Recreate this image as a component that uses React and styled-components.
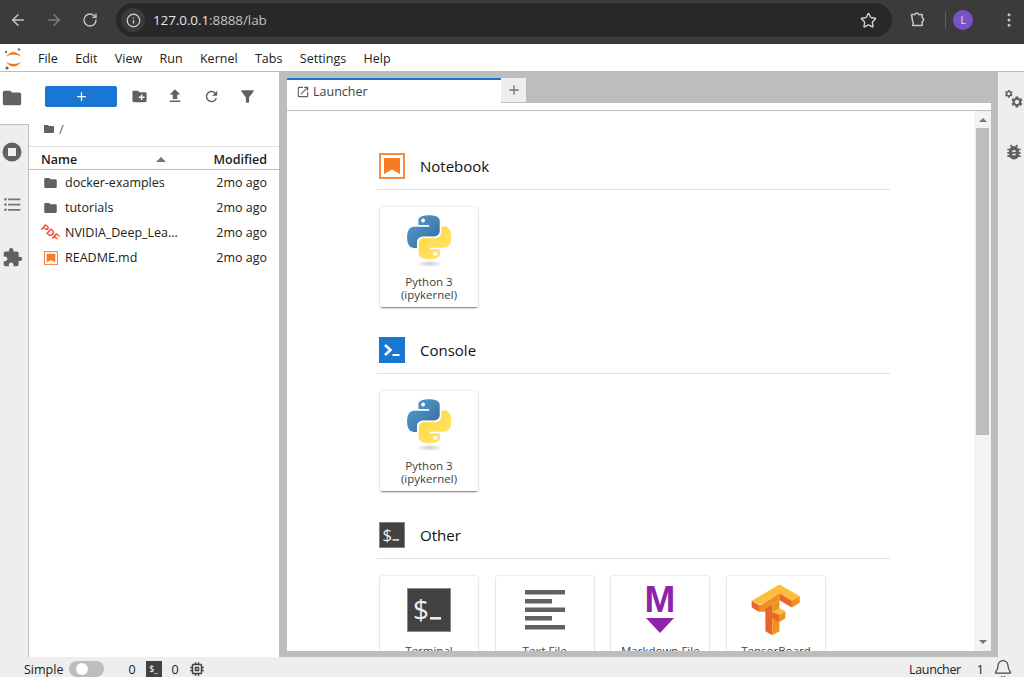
import React from 'react';
import styled, { createGlobalStyle } from 'styled-components';
import { ArrowLeft, ArrowRight, RotateCw, Info, Star, EllipsisVertical, Bell } from 'lucide-react';
import {
  MdFolder, MdCreateNewFolder, MdFileUpload, MdRefresh, MdFilterAlt, MdFormatListBulleted,
  MdExtension, MdBugReport, MdOpenInNew, MdAdd, MdMemory,
} from 'react-icons/md';

const GlobalStyle = createGlobalStyle`
  html, body { margin: 0; padding: 0; height: 100%; overflow: hidden; }
  body { font-family: "Open Sans", "Noto Sans", sans-serif; color: #212121; background: #fff; }
`;

const Page = styled.div`
  width: 1024px;
  height: 677px;
  display: flex;
  flex-direction: column;
  overflow: hidden;
`;

/* browser chrome */
const Chrome = styled.div`
  height: 44px;
  flex: none;
  box-sizing: border-box;
  padding: 3px 0 7px;
  background: #3b3b3b;
  display: flex;
  align-items: stretch;
`;
const NavGroup = styled.div`
  width: 116px;
  flex: none;
  display: flex;
  align-items: center;
`;
const NavBtn = styled.div`
  width: 36px;
  display: flex;
  justify-content: center;
  color: ${p => (p.$off ? '#7d7d7d' : '#c7c7c7')};
`;
const AddressBar = styled.div`
  width: 776px;
  flex: none;
  background: #282828;
  border-radius: 17px;
  display: flex;
  align-items: center;
  padding: 0 15px 0 5px;
  box-sizing: border-box;
`;
const InfoChip = styled.div`
  width: 24px;
  height: 24px;
  border-radius: 50%;
  background: #3b3b3b;
  color: #d6d6d6;
  display: flex;
  align-items: center;
  justify-content: center;
`;
const Url = styled.div`
  margin-left: 8px;
  font-size: 13.5px;
  letter-spacing: -0.1px;
  color: #c2c2c2;
  flex: 1;
  b { font-weight: 400; color: #e6e6e6; }
`;
const ChromeRight = styled.div`
  flex: 1;
  display: flex;
  align-items: center;
  color: #c7c7c7;
  padding-left: 17px;
`;
const Separator = styled.div`
  width: 1px;
  height: 16px;
  background: #5f5f5f;
  margin: 0 7px 0 18px;
`;
const Avatar = styled.div`
  width: 20px;
  height: 20px;
  border-radius: 50%;
  background: #7a52c7;
  color: #e8e0f8;
  font-size: 10px;
  display: flex;
  align-items: center;
  justify-content: center;
  margin: 0 27px 0 0;
`;

/* jupyter menu */
const MenuBar = styled.div`
  height: 28px;
  flex: none;
  box-sizing: border-box;
  display: flex;
  align-items: center;
  padding: 1px 0 0 1px;
  background: #fff;
  border-bottom: 1px solid #bdbdbd;
`;
const MenuItem = styled.span`
  font-size: 12.5px;
  margin-left: ${p => (p.$first ? '13px' : '0')};
  margin-right: 17.4px;
`;

const Body = styled.div`
  flex: 1;
  min-height: 0;
  display: flex;
  background: #bdbdbd;
`;

const SideBar = styled.div`
  width: 29px;
  flex: none;
  display: flex;
  flex-direction: column;
  background: #eee;
  border-right: 1px solid #bdbdbd;
  box-sizing: border-box;
`;
const SideTab = styled.div`
  height: 53px;
  width: ${p => (p.$active ? '29px' : 'auto')};
  flex: none;
  display: flex;
  align-items: center;
  justify-content: center;
  box-sizing: border-box;
  padding-right: ${p => (p.$active ? '5px' : '4px')};
  color: ${p => p.$color || '#616161'};
  background: ${p => (p.$active ? '#fff' : 'transparent')};
  border-bottom: ${p => (p.$active ? '1px solid #bdbdbd' : 'none')};
`;

const FilePanel = styled.div`
  width: 250px;
  flex: none;
  background: #fff;
  display: flex;
  flex-direction: column;
  margin-right: 8px;
  font-size: 12.5px;
`;
const FileToolbar = styled.div`
  height: 49px;
  flex: none;
  display: flex;
  align-items: center;
  padding: 0 0 1px 16px;
  box-sizing: border-box;
  color: #616161;
`;
const NewButton = styled.div`
  width: 72px;
  height: 21px;
  background: #1976d2;
  border-radius: 2px;
  color: #fff;
  display: flex;
  align-items: center;
  justify-content: center;
  margin-right: 4px;
`;
const ToolButton = styled.div`
  width: 36px;
  display: flex;
  justify-content: center;
`;
const Crumbs = styled.div`
  height: 26px;
  display: flex;
  align-items: center;
  gap: 4px;
  padding: 0 0 10px 14px;
  box-sizing: border-box;
  color: #616161;
  border-bottom: 1px solid #e0e0e0;
  flex: none;
  font-size: 13px;
`;
const ListHeader = styled.div`
  height: 23px;
  flex: none;
  box-sizing: border-box;
  display: flex;
  align-items: center;
  padding: 2px 12px 0;
  font-weight: 600;
  border-bottom: 1px solid #bdbdbd;
`;
const HeaderName = styled.span`
  flex: 1;
`;
const SortArrow = styled.span`
  width: 0;
  height: 0;
  border-left: 5px solid transparent;
  border-right: 5px solid transparent;
  border-bottom: 5px solid #757575;
  margin-right: 48px;
`;
const FileRow = styled.div`
  height: 25px;
  display: flex;
  align-items: center;
  padding: 0 12px 0 14px;
  flex: none;
`;
const FileIcon = styled.span`
  width: 15px;
  height: 16px;
  flex: none;
  margin-right: 7px;
  color: #616161;
  display: flex;
  align-items: center;
  justify-content: center;
`;
const FileName = styled.span`
  flex: 1;
  white-space: nowrap;
  overflow: hidden;
`;
const FileDate = styled.span`
  white-space: nowrap;
`;

/* dock */
const Dock = styled.div`
  width: 704px;
  flex: none;
  display: flex;
  flex-direction: column;
  padding-bottom: 6px;
  box-sizing: border-box;
`;
const TabBar = styled.div`
  height: 31px;
  flex: none;
  padding-top: 6px;
  box-sizing: border-box;
  display: flex;
  align-items: flex-start;
`;
const Tab = styled.div`
  width: 214px;
  height: 25px;
  box-sizing: border-box;
  background: #fff;
  border-top: 2px solid #1976d2;
  display: flex;
  align-items: center;
  padding-left: 9px;
  gap: 3px;
  font-size: 12.5px;
  color: #424242;
`;
const AddTab = styled.div`
  width: 25px;
  height: 24px;
  background: #eee;
  color: #757575;
  display: flex;
  align-items: center;
  justify-content: center;
`;
const TabStrip = styled.div`
  height: 8px;
  flex: none;
  background: #fff;
  border-bottom: 1px solid #bdbdbd;
  box-sizing: border-box;
`;
const LauncherPane = styled.div`
  flex: 1;
  min-height: 0;
  display: flex;
  background: #fff;
`;
const LauncherBody = styled.div`
  flex: 1;
  overflow: hidden;
  padding: 42px 0 0 90px;
`;
const ScrollTrack = styled.div`
  width: 17px;
  flex: none;
  background: #f3f3f3;
  display: flex;
  flex-direction: column;
  align-items: center;
`;
const ScrollArrow = styled.span`
  width: 0;
  height: 0;
  margin-top: ${p => (p.$down ? 'auto' : '7px')};
  margin-bottom: ${p => (p.$down ? '7px' : '6px')};
  border-left: 4px solid transparent;
  border-right: 4px solid transparent;
  border-${p => (p.$down ? 'top' : 'bottom')}: 4px solid #757575;
`;
const ScrollThumb = styled.div`
  width: 13px;
  height: 307px;
  background: #bdbdbd;
`;

const Section = styled.section`
  width: 513px;
  margin-bottom: ${p => p.$after || 30}px;
`;
const SectionHead = styled.div`
  display: flex;
  align-items: center;
  height: 26px;
  padding: 0 0 10px 2px;
  border-bottom: 1px solid #e0e0e0;
`;
const SectionTitle = styled.h2`
  margin: 0 0 0 15px;
  font-size: 15px;
  font-weight: 400;
  color: #111;
`;
const CardRow = styled.div`
  display: flex;
  gap: 17.67px;
  margin: 17px 0 0 3px;
`;
const Card = styled.div`
  width: 98px;
  height: 100px;
  flex: none;
  border-radius: 2px;
  background: #fff;
  box-shadow: 0 2px 2px -1px rgba(0, 0, 0, 0.5), 0 0 2px rgba(0, 0, 0, 0.25);
  display: flex;
  flex-direction: column;
  align-items: center;
`;
const CardIcon = styled.div`
  height: 69px;
  flex: none;
  display: flex;
  align-items: flex-start;
  justify-content: center;
  padding-top: ${p => p.$top || 8}px;
  box-sizing: border-box;
`;
const CardLabel = styled.div`
  font-size: 11.5px;
  line-height: 12.5px;
  text-align: center;
  color: #424242;
`;

const RightBar = styled.div`
  flex: 1;
  margin-left: 7px;
  padding-left: 6px;
  background: #eee;
  display: flex;
  flex-direction: column;
  color: #616161;
`;
const RightTab = styled.div`
  height: 53px;
  display: flex;
  align-items: center;
  justify-content: center;
`;

/* status */
const StatusBar = styled.div`
  height: 20px;
  flex: none;
  box-sizing: border-box;
  background: #eee;
  display: flex;
  align-items: center;
  font-size: 12.5px;
  padding: 4px 0 0 24px;
  overflow: hidden;
`;
const Toggle = styled.div`
  width: 35px;
  height: 16px;
  border-radius: 8px;
  background: #bdbdbd;
  margin: 0 24px 0 6px;
  box-sizing: border-box;
  padding: 2px 0 0 7px;
  flex: none;
`;
const ToggleKnob = styled.div`
  width: 12px;
  height: 12px;
  border-radius: 50%;
  background: #fff;
`;
const MiniTerm = styled.div`
  width: 16px;
  height: 16px;
  margin: 0 10px;
  background: #424242;
  color: #eee;
  font-size: 8px;
  line-height: 16px;
  text-align: center;
  font-weight: 600;
`;
const Spacer = styled.div`
  flex: 1;
`;
const StatusLabel = styled.span`
  letter-spacing: -0.35px;
`;
const StatusGap = styled.span`
  margin: ${p => p.$m};
  display: flex;
  align-items: center;
`;

const GEAR = 'M19.14 12.94c.04-.3.06-.61.06-.94 0-.32-.02-.64-.07-.94l2.03-1.58c.18-.14.23-.41.12-.61l-1.92-3.32c-.12-.22-.37-.29-.59-.22l-2.39.96c-.5-.38-1.03-.7-1.62-.94l-.36-2.54c-.04-.24-.24-.41-.48-.41h-3.84c-.24 0-.43.17-.47.41l-.36 2.54c-.59.24-1.13.57-1.62.94l-2.39-.96c-.22-.08-.47 0-.59.22L2.74 8.87c-.12.21-.08.47.12.61l2.03 1.58c-.05.3-.09.63-.09.94s.02.64.07.94l-2.03 1.58c-.18.14-.23.41-.12.61l1.92 3.32c.12.22.37.29.59.22l2.39-.96c.5.38 1.03.7 1.62.94l.36 2.54c.05.24.24.41.48.41h3.84c.24 0 .44-.17.47-.41l.36-2.54c.59-.24 1.13-.56 1.62-.94l2.39.96c.22.08.47 0 .59-.22l1.92-3.32c.12-.22.07-.47-.12-.61l-2.01-1.58zM12 15.6c-1.98 0-3.6-1.62-3.6-3.6s1.62-3.6 3.6-3.6 3.6 1.62 3.6 3.6-1.62 3.6-3.6 3.6z';

const JupyterLogo = () => (
  <svg width="24" height="24" viewBox="0 0 24 24">
    <path d="M5 10.5 Q12.5 1.5 20 10.5 Q12.5 6.5 5 10.5z" fill="#f37726" />
    <path d="M5 16 Q12.5 25 20 16 Q12.5 20 5 16z" fill="#f37726" />
    <circle cx="18" cy="3.5" r="1.3" fill="#767677" />
    <circle cx="5" cy="6" r="1.2" fill="#767677" />
    <circle cx="6" cy="22" r="1.6" fill="#616262" />
  </svg>
);

const ExtensionsIcon = () => (
  <svg width="18" height="18" viewBox="0 0 18 18" fill="none" stroke="#c7c7c7" strokeWidth="1.5" strokeLinejoin="round">
    <path d="M2.5 3.5h3.4a1.9 1.9 0 0 1 3.7 0h3.6v3.2a1.9 1.9 0 0 1 0 3.7v4.1H3.6c.9-1.5.9-3 0-4.5z" />
  </svg>
);

const StopIcon = () => (
  <svg width="20" height="20" viewBox="0 0 20 20">
    <path fillRule="evenodd" d="M10 .5a9.5 9.5 0 1 0 0 19 9.5 9.5 0 0 0 0-19zM6 6h8v8H6z" fill="#616161" />
  </svg>
);

const GearsIcon = () => (
  <svg width="20" height="20" viewBox="0 0 20 20" fill="#616161">
    <g transform="scale(.4)"><path d={GEAR} /></g>
    <g transform="translate(6 6) scale(.58)"><path d={GEAR} /></g>
  </svg>
);

const PythonIcon = ({ id }) => (
  <svg width="44" height="54" viewBox="0 0 110 135">
    <defs>
      <linearGradient id={`${id}b`} x1="0" y1="0" x2="1" y2="1">
        <stop offset="0" stopColor="#5a9fd4" />
        <stop offset="1" stopColor="#306998" />
      </linearGradient>
      <linearGradient id={`${id}y`} x1="1" y1="1" x2="0" y2="0">
        <stop offset="0" stopColor="#ffd43b" />
        <stop offset="1" stopColor="#ffe873" />
      </linearGradient>
      <radialGradient id={`${id}s`}>
        <stop offset="0" stopColor="#b8b8b8" stopOpacity=".75" />
        <stop offset="1" stopColor="#b8b8b8" stopOpacity="0" />
      </radialGradient>
    </defs>
    <path
      fillRule="evenodd"
      fill={`url(#${id}b)`}
      d="M54.9.5c-28 0-26.3 12.2-26.3 12.2l0 12.6h26.7v3.8H18S.1 27.1.1 55.3c0 28.2 15.6 27.2 15.6 27.2h9.3V69.4s-.5-15.6 15.4-15.6h26.5s14.9.2 14.9-14.4V15.3S84.2.5 54.9.5zM40.2 9a4.8 4.8 0 1 1 0 9.6 4.8 4.8 0 1 1 0-9.6z"
    />
    <path
      fillRule="evenodd"
      fill={`url(#${id}y)`}
      transform="rotate(180 55.5 55.5)"
      d="M54.9.5c-28 0-26.3 12.2-26.3 12.2l0 12.6h26.7v3.8H18S.1 27.1.1 55.3c0 28.2 15.6 27.2 15.6 27.2h9.3V69.4s-.5-15.6 15.4-15.6h26.5s14.9.2 14.9-14.4V15.3S84.2.5 54.9.5zM40.2 9a4.8 4.8 0 1 1 0 9.6 4.8 4.8 0 1 1 0-9.6z"
    />
    <ellipse cx="56" cy="122" rx="34" ry="8" fill={`url(#${id}s)`} />
  </svg>
);

const NotebookIcon = ({ size = 26 }) => (
  <svg width={size} height={size} viewBox="0 0 26 26">
    <rect x="1" y="1" width="24" height="24" fill="#fff" stroke="#f37726" strokeOpacity=".85" strokeWidth="2" />
    <path d="M5 5h16v16l-8-4.5L5 21z" fill="#f57c22" />
  </svg>
);

const ConsoleIcon = () => (
  <svg width="26" height="26" viewBox="0 0 26 26">
    <rect width="26" height="26" fill="#1976d2" />
    <path d="M6 8l5.5 5-5.5 5" fill="none" stroke="#fff" strokeWidth="2.6" />
    <rect x="13.5" y="17" width="7" height="2" fill="#fff" />
  </svg>
);

const TerminalIcon = ({ size }) => (
  <svg width={size} height={size} viewBox="0 0 44 44">
    <rect x=".5" y=".5" width="43" height="43" fill="#424242" stroke="#8a8a8a" />
    <text x="6" y="32" fontFamily="Open Sans, sans-serif" fontSize="28" fontWeight="400" fill="#eee">$</text>
    <rect x="23" y="29" width="11" height="2.6" fill="#eee" />
  </svg>
);

const TextFileIcon = () => (
  <svg width="40" height="42" viewBox="0 0 40 42" fill="#616161">
    <rect y="1" width="40" height="4.5" />
    <rect y="10" width="27" height="4.5" />
    <rect y="18.5" width="40" height="4.5" />
    <rect y="27" width="27" height="4.5" />
    <rect y="36" width="40" height="4.5" />
  </svg>
);

const MarkdownIcon = () => (
  <svg width="34" height="48" viewBox="0 0 34 48">
    <text x="17" y="26" textAnchor="middle" fontFamily="Liberation Sans, sans-serif" fontWeight="700" fontSize="37" fill="#8e24aa">M</text>
    <path d="M3 32h28L17 47z" fill="#8e24aa" />
  </svg>
);

const TensorBoardIcon = () => (
  <svg width="50" height="54" viewBox="453 70 153 160">
    <path d="M455 122L540 72l62 36-24 14-38-23-60 35z" fill="#fbbd3b" />
    <path d="M455 122l25 14v21l-25-15z" fill="#e9682e" />
    <path d="M480 136l60-37v22l-22 13v8l-21 13-17 0z" fill="#f0901f" />
    <path d="M540 99l38 23v20l-38-22z" fill="#e9682e" />
    <path d="M578 122l24-14v20l-24 14z" fill="#f0901f" />
    <path d="M497 147l21-13v93l-21-12z" fill="#e9632d" />
    <path d="M518 134l22-13v94l-22 12z" fill="#f0901f" />
    <path d="M518 157l22-13 18 10-18 11z" fill="#fbbd3b" />
    <path d="M518 157l22 8v22l-22-12z" fill="#e9632d" />
    <path d="M540 165l18-11v21l-18 12z" fill="#f0901f" />
  </svg>
);

const PdfIcon = () => (
  <svg width="15" height="15" viewBox="0 0 15 15" overflow="visible">
    <text x="7.5" y="11" textAnchor="middle" transform="rotate(40 7.5 7.5)" fontFamily="Liberation Sans, sans-serif" fontWeight="700" fontSize="10" fill="#f44336">PDF</text>
  </svg>
);

const menus = ['File', 'Edit', 'View', 'Run', 'Kernel', 'Tabs', 'Settings', 'Help'];
const files = [
  { name: 'docker-examples', icon: <MdFolder size={18} /> },
  { name: 'tutorials', icon: <MdFolder size={18} /> },
  { name: 'NVIDIA_Deep_Lea...', icon: <PdfIcon /> },
  { name: 'README.md', icon: <NotebookIcon size={14} /> },
];

const App = () => (
  <Page>
    <GlobalStyle />
    <Chrome>
      <NavGroup>
        <NavBtn><ArrowLeft size={18} /></NavBtn>
        <NavBtn $off><ArrowRight size={18} /></NavBtn>
        <NavBtn><RotateCw size={16} /></NavBtn>
      </NavGroup>
      <AddressBar>
        <InfoChip><Info size={15} /></InfoChip>
        <Url><b>127.0.0.1</b>:8888/lab</Url>
        <Star size={17} color="#d0d0d0" />
      </AddressBar>
      <ChromeRight>
        <ExtensionsIcon />
        <Separator />
        <Avatar>L</Avatar>
        <EllipsisVertical size={18} />
      </ChromeRight>
    </Chrome>

    <MenuBar>
      <JupyterLogo />
      {menus.map((m, i) => <MenuItem key={m} $first={i === 0}>{m}</MenuItem>)}
    </MenuBar>

    <Body>
      <SideBar>
        <SideTab $active><MdFolder size={22} /></SideTab>
        <SideTab><StopIcon /></SideTab>
        <SideTab $color="#757575"><MdFormatListBulleted size={21} /></SideTab>
        <SideTab><MdExtension size={21} /></SideTab>
      </SideBar>

      <FilePanel>
        <FileToolbar>
          <NewButton><MdAdd size={15} /></NewButton>
          <ToolButton><MdCreateNewFolder size={17} /></ToolButton>
          <ToolButton><MdFileUpload size={18} /></ToolButton>
          <ToolButton><MdRefresh size={17} /></ToolButton>
          <ToolButton><MdFilterAlt size={19} /></ToolButton>
        </FileToolbar>
        <Crumbs><MdFolder size={12} />/</Crumbs>
        <ListHeader>
          <HeaderName>Name</HeaderName>
          <SortArrow />
          <span>Modified</span>
        </ListHeader>
        {files.map(f => (
          <FileRow key={f.name}>
            <FileIcon>{f.icon}</FileIcon>
            <FileName>{f.name}</FileName>
            <FileDate>2mo ago</FileDate>
          </FileRow>
        ))}
      </FilePanel>

      <Dock>
        <TabBar>
          <Tab><MdOpenInNew size={14} color="#616161" />Launcher</Tab>
          <AddTab><MdAdd size={16} /></AddTab>
        </TabBar>
        <TabStrip />
        <LauncherPane>
          <LauncherBody>
            <Section $after={30}>
              <SectionHead><NotebookIcon /><SectionTitle>Notebook</SectionTitle></SectionHead>
              <CardRow>
                <Card>
                  <CardIcon><PythonIcon id="nb" /></CardIcon>
                  <CardLabel>Python 3<br />(ipykernel)</CardLabel>
                </Card>
              </CardRow>
            </Section>
            <Section $after={31}>
              <SectionHead><ConsoleIcon /><SectionTitle>Console</SectionTitle></SectionHead>
              <CardRow>
                <Card>
                  <CardIcon><PythonIcon id="co" /></CardIcon>
                  <CardLabel>Python 3<br />(ipykernel)</CardLabel>
                </Card>
              </CardRow>
            </Section>
            <Section>
              <SectionHead><TerminalIcon size={26} /><SectionTitle>Other</SectionTitle></SectionHead>
              <CardRow>
                <Card>
                  <CardIcon $top={12}><TerminalIcon size={44} /></CardIcon>
                  <CardLabel>Terminal</CardLabel>
                </Card>
                <Card>
                  <CardIcon $top={13}><TextFileIcon /></CardIcon>
                  <CardLabel>Text File</CardLabel>
                </Card>
                <Card>
                  <CardIcon $top={10}><MarkdownIcon /></CardIcon>
                  <CardLabel>Markdown File</CardLabel>
                </Card>
                <Card>
                  <CardIcon $top={7}><TensorBoardIcon /></CardIcon>
                  <CardLabel>TensorBoard</CardLabel>
                </Card>
              </CardRow>
            </Section>
          </LauncherBody>
          <ScrollTrack>
            <ScrollArrow />
            <ScrollThumb />
            <ScrollArrow $down />
          </ScrollTrack>
        </LauncherPane>
      </Dock>

      <RightBar>
        <RightTab><GearsIcon /></RightTab>
        <RightTab><MdBugReport size={20} /></RightTab>
      </RightBar>
    </Body>

    <StatusBar>
      <span>Simple</span>
      <Toggle><ToggleKnob /></Toggle>
      <span>0</span>
      <MiniTerm>$_</MiniTerm>
      <span>0</span>
      <StatusGap $m="0 0 0 9px"><MdMemory size={18} color="#424242" /></StatusGap>
      <Spacer />
      <StatusLabel>Launcher</StatusLabel>
      <StatusGap $m="0 0 0 16px">1</StatusGap>
      <StatusGap $m="0 11px 0 9px"><Bell size={20} strokeWidth={1.4} color="#424242" /></StatusGap>
    </StatusBar>
  </Page>
);

export default App;
